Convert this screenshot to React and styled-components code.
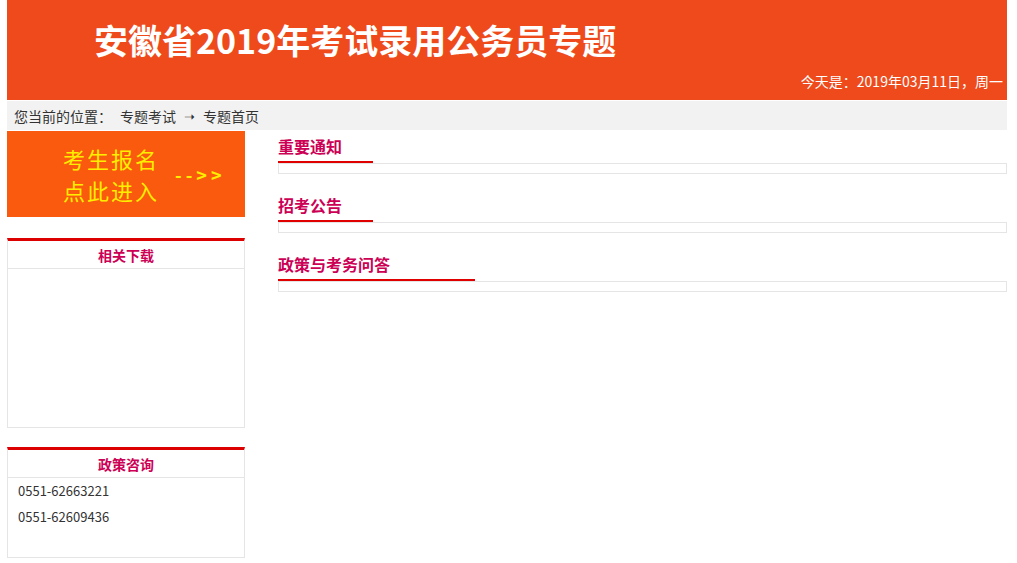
import React from 'react';
import styled, { createGlobalStyle } from 'styled-components';

const GlobalStyle = createGlobalStyle`
  html, body {
    margin: 0;
    padding: 0;
    background: #fff;
    font-family: "Noto Sans CJK SC", "Liberation Sans", sans-serif;
    color: #333;
  }
`;

const Page = styled.div`
  width: 1000px;
  margin: 0 0 0 7px;
`;

const Header = styled.header`
  height: 100px;
  background: #ee4a1b;
  display: flex;
  flex-direction: column;
  justify-content: space-between;
  padding: 0 4px 0 87px;
  box-sizing: border-box;
`;

const Title = styled.h1`
  margin: 0;
  padding-top: 17px;
  font-size: 34px;
  line-height: 46px;
  font-weight: 700;
  color: #fff;
`;

const Today = styled.div`
  align-self: flex-end;
  font-size: 14px;
  line-height: 20px;
  color: #fff;
  padding-bottom: 9px;
`;

const Crumbs = styled.div`
  margin-top: 1px;
  height: 29px;
  background: #f2f2f2;
  display: flex;
  align-items: center;
  padding-left: 7px;
  font-size: 14px;
  color: #333;
`;

const CrumbLink = styled.span`
  margin-left: ${(p) => p.$gap || 0}px;
`;

const Arrow = styled.span`
  margin: 0 8px;
  font-size: 13px;
`;

const Body = styled.div`
  display: flex;
  gap: 33px;
`;

const Side = styled.aside`
  width: 238px;
  flex: none;
  display: flex;
  flex-direction: column;
  gap: 19px;
`;

const Banner = styled.a`
  height: 86px;
  margin: 1px 0 2px;
  background: #f95a0e;
  display: flex;
  align-items: center;
  padding-left: 56px;
  color: #ffee00;
  text-decoration: none;
  cursor: pointer;
`;

const BannerText = styled.div`
  font-size: 22px;
  line-height: 32px;
  letter-spacing: 2px;
`;

const BannerArrow = styled.span`
  margin-left: 16px;
  font-size: 18px;
  font-weight: 700;
  letter-spacing: 4px;
`;

const Box = styled.div`
  border: 1px solid #e5e5e5;
  border-top: 3px solid #dd0000;
  display: flex;
  flex-direction: column;
`;

const BoxHead = styled.div`
  height: 27px;
  border-bottom: 1px solid #e5e5e5;
  display: flex;
  align-items: center;
  justify-content: center;
  font-size: 14px;
  font-weight: 700;
  color: #cc0055;
`;

const BoxBody = styled.div`
  height: ${(p) => p.$h}px;
  padding: 0 10px;
  font-size: 13px;
  line-height: 26px;
  color: #333;
`;

const Main = styled.main`
  flex: 1;
  display: flex;
  flex-direction: column;
  gap: 15px;
`;

const Section = styled.section`
  display: flex;
  flex-direction: column;
`;

const SecHead = styled.div`
  height: 33px;
  display: flex;
  align-items: flex-end;
`;

const SecTitle = styled.h2`
  margin: 0;
  width: ${(p) => p.$w}px;
  font-size: 16px;
  font-weight: 700;
  line-height: 24px;
  padding-bottom: 3px;
  color: #cc0055;
  border-bottom: 2px solid #e00000;
`;

const SecList = styled.div`
  height: 9px;
  border: 1px solid #e5e5e5;
`;

const sections = [
  { title: '重要通知', w: 95 },
  { title: '招考公告', w: 95 },
  { title: '政策与考务问答', w: 197 },
];

export default function App() {
  return (
    <Page>
      <GlobalStyle />
      <Header>
        <Title>安徽省2019年考试录用公务员专题</Title>
        <Today>今天是：2019年03月11日，周一</Today>
      </Header>
      <Crumbs>
        您当前的位置：
        <CrumbLink $gap={8}>专题考试</CrumbLink>
        <Arrow>➝</Arrow>
        <CrumbLink>专题首页</CrumbLink>
      </Crumbs>
      <Body>
        <Side>
          <Banner>
            <BannerText>
              考生报名
              <br />
              点此进入
            </BannerText>
            <BannerArrow>--&gt;&gt;</BannerArrow>
          </Banner>
          <Box>
            <BoxHead>相关下载</BoxHead>
            <BoxBody $h={158} />
          </Box>
          <Box>
            <BoxHead>政策咨询</BoxHead>
            <BoxBody $h={79}>
              <div>0551-62663221</div>
              <div>0551-62609436</div>
            </BoxBody>
          </Box>
        </Side>
        <Main>
          {sections.map((s) => (
            <Section key={s.title}>
              <SecHead>
                <SecTitle $w={s.w}>{s.title}</SecTitle>
              </SecHead>
              <SecList />
            </Section>
          ))}
        </Main>
      </Body>
    </Page>
  );
}
